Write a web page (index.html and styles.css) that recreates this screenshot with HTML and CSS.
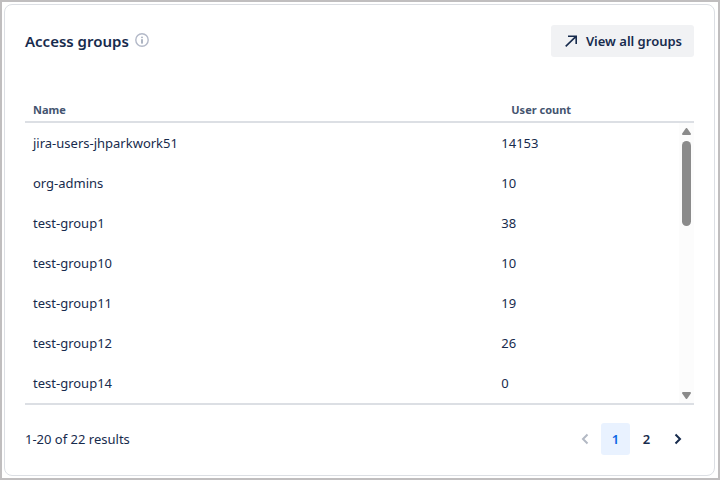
FILE: index.html
```html
<!DOCTYPE html>
<html lang="en">

<head>
    <meta charset="UTF-8">
    <meta name="viewport" content="width=device-width, initial-scale=1.0">
    <title>Access groups</title>
    <link rel="stylesheet" href="styles.css">
</head>

<body>
    <main class="card">
        <header class="card__header">
            <h1>Access groups</h1>
            <svg class="info" width="14" height="14" viewBox="0 0 14 14" aria-hidden="true">
                <circle cx="7" cy="7" r="6.2" fill="none" stroke="#b3b9c8" stroke-width="1.4" />
                <rect x="6.1" y="3.4" width="1.8" height="1.8" rx="0.9" fill="#a5adbd" />
                <rect x="6.1" y="6.2" width="1.8" height="4.4" fill="#a5adbd" />
            </svg>
            <button type="button" class="view-all">
                <svg width="14" height="14" viewBox="0 0 14 14" fill="none" stroke="#172b4d" stroke-width="1.6" aria-hidden="true">
                    <path d="M1.7 12.3L12 2.4M4 2.3H12.2V10" />
                </svg>
                View all groups
            </button>
        </header>
        <section class="groups">
            <table class="groups__table">
                <thead>
                    <tr>
                        <th class="name" scope="col">Name</th>
                        <th class="count" scope="col">User count</th>
                    </tr>
                </thead>
                <tbody>
                    <tr><td>jira-users-jhparkwork51</td><td>14153</td></tr>
                    <tr><td>org-admins</td><td>10</td></tr>
                    <tr><td>test-group1</td><td>38</td></tr>
                    <tr><td>test-group10</td><td>10</td></tr>
                    <tr><td>test-group11</td><td>19</td></tr>
                    <tr><td>test-group12</td><td>26</td></tr>
                    <tr><td>test-group14</td><td>0</td></tr>
                </tbody>
            </table>
            <div class="scrollbar" aria-hidden="true">
                <svg width="9" height="7" viewBox="0 0 9 7"><path d="M4.5 1L8 6H1Z" /></svg>
                <div class="scrollbar__thumb"></div>
                <svg width="9" height="7" viewBox="0 0 9 7"><path d="M4.5 6L1 1H8Z" /></svg>
            </div>
        </section>
        <footer class="card__footer">
            <p>1-20 of 22 results</p>
            <nav class="pages" aria-label="Pagination">
                <button type="button" class="page" aria-label="Previous" disabled>
                    <svg width="8" height="12" viewBox="0 0 8 12"><path d="M6.5 1.5L2 6L6.5 10.5" /></svg>
                </button>
                <button type="button" class="page page--current" aria-current="page">1</button>
                <button type="button" class="page">2</button>
                <button type="button" class="page" aria-label="Next">
                    <svg width="8" height="12" viewBox="0 0 8 12"><path d="M1.5 1.5L6 6L1.5 10.5" /></svg>
                </button>
            </nav>
        </footer>
    </main>
</body>

</html>
```
FILE: styles.css
```css
* {
    box-sizing: border-box;
}

body {
    margin: 0;
    min-height: 100vh;
    padding: 2px 3px 2px 2px;
    border: 2px solid #c0bebf;
    background-color: #fff;
    color: #172b4d;
    font-family: "Noto Sans", "Open Sans", sans-serif;
    font-size: 13px;
    line-height: 20px;
}

button {
    border: 0;
    border-radius: 3px;
    background: none;
    color: inherit;
    font: inherit;
    font-weight: 600;
}

.card {
    padding: 20px;
    border: 1px solid #dcdfe4;
    border-radius: 8px;
}

.card__header {
    display: flex;
    align-items: center;
    height: 32px;
}

.card__header h1 {
    margin: 0;
    font-size: 15px;
    font-weight: 600;
    line-height: 20px;
}

.info {
    margin: 0 auto 2px 6px;
}

.view-all {
    display: flex;
    align-items: center;
    gap: 8px;
    height: 32px;
    padding: 0 12px 0 13px;
    background-color: #f1f2f4;
}

/* the scrollbar shares the grid cell with the table */
.groups {
    display: grid;
    margin-top: 40px;
    border-bottom: 2px solid #dcdfe4;
}

.groups__table,
.scrollbar {
    grid-area: 1 / 1;
}

.groups__table {
    width: 100%;
    table-layout: fixed;
    border-collapse: separate;
    border-spacing: 0;
}

.groups__table th {
    height: 26px;
    padding: 2px 8px 0;
    border-bottom: 2px solid #dcdfe4;
    color: #44546f;
    font-size: 11px;
    font-weight: 700;
    line-height: 20px;
    text-align: left;
}

.groups__table .name {
    width: 70%;
}

.groups__table .count {
    padding-left: 18px;
}

.groups__table td {
    height: 40px;
    padding: 0 8px;
}

.scrollbar {
    display: flex;
    flex-direction: column;
    align-items: center;
    justify-self: end;
    width: 15px;
    margin-top: 26px;
    padding: 5px 0 4px;
    background-color: #fcfcfc;
    fill: #8b8b8b;
    stroke: #8b8b8b;
    stroke-linejoin: round;
    stroke-width: 2;
}

.scrollbar__thumb {
    width: 9px;
    height: 85px;
    margin: 6px 0 auto;
    border-radius: 5px;
    background-color: #8b8b8b;
}

.card__footer {
    display: flex;
    align-items: center;
    justify-content: space-between;
    margin-top: 18px;
}

.card__footer p {
    margin: 0;
}

.pages {
    display: flex;
    gap: 2px;
    padding-right: 2px;
}

.page {
    display: flex;
    align-items: center;
    justify-content: center;
    width: 29px;
    height: 32px;
    padding: 0;
}

.page svg {
    fill: none;
    stroke: #172b4d;
    stroke-width: 2;
}

.page:disabled svg {
    stroke: #b3b9c4;
}

.page--current {
    background-color: #e9f2ff;
    color: #0c66e4;
}
```
